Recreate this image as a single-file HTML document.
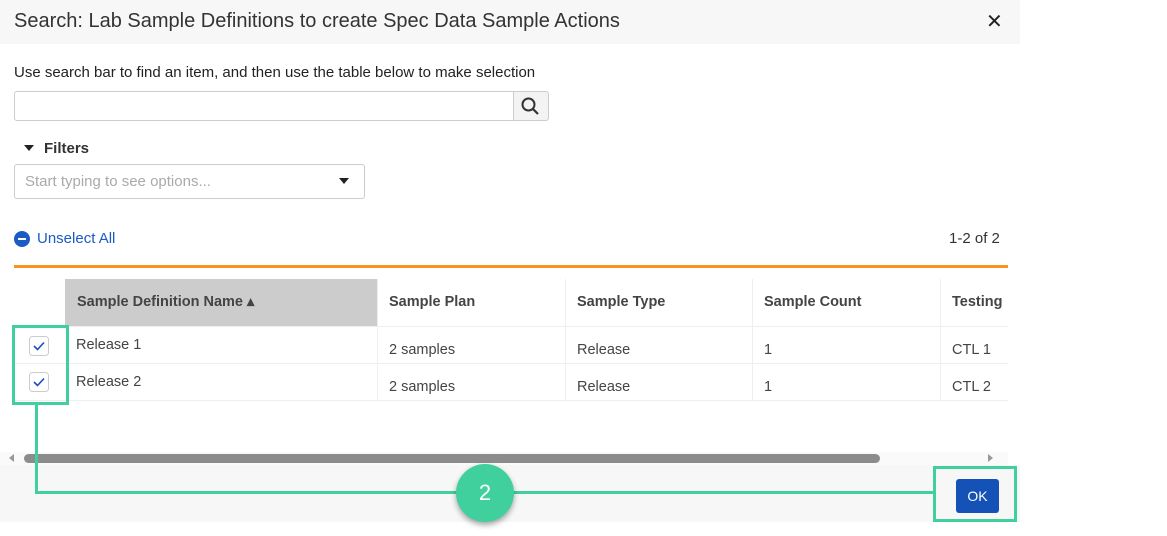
<!DOCTYPE html>
<html><head><style>
body{margin:0;width:1167px;height:536px;background:#fff;font-family:"Liberation Sans",sans-serif;position:relative;overflow:hidden;color:#333}
.a{position:absolute}
</style></head><body>
<div class="a" style="left:0;top:0;width:1020px;height:44px;background:#f7f7f7"></div>
<div class="a" style="left:14px;top:10px;font-size:20px;color:#333">Search: Lab Sample Definitions to create Spec Data Sample Actions</div>
<div class="a" style="left:986px;top:9px;font-size:20px;color:#222">✕</div>
<div class="a" style="left:14px;top:64px;font-size:15px;color:#222">Use search bar to find an item, and then use the table below to make selection</div>
<div class="a" style="left:14px;top:91px;width:498px;height:28px;border:1px solid #ccc;border-radius:3px 0 0 3px"></div>
<div class="a" style="left:513px;top:91px;width:34px;height:28px;border:1px solid #ccc;background:#f3f3f3;border-radius:0 3px 3px 0"></div>
<svg class="a" style="left:520px;top:96px" width="20" height="20" viewBox="0 0 20 20"><circle cx="8.5" cy="8.5" r="6" fill="none" stroke="#333" stroke-width="2"/><line x1="13" y1="13" x2="18" y2="18" stroke="#333" stroke-width="2.2"/></svg>
<div class="a" style="left:24px;top:145px;width:0;height:0;border-left:5px solid transparent;border-right:5px solid transparent;border-top:6px solid #222"></div>
<div class="a" style="left:44px;top:140px;font-size:15px;font-weight:bold;color:#333">Filters</div>
<div class="a" style="left:14px;top:164px;width:349px;height:33px;border:1px solid #ccc;border-radius:3px"></div>
<div class="a" style="left:25px;top:173px;font-size:15px;color:#aaa">Start typing to see options...</div>
<div class="a" style="left:339px;top:178px;width:0;height:0;border-left:5px solid transparent;border-right:5px solid transparent;border-top:6px solid #222"></div>
<div class="a" style="left:14px;top:231px;width:16px;height:16px;border-radius:50%;background:#1a5bc4"></div>
<div class="a" style="left:18px;top:238px;width:8px;height:2px;background:#fff"></div>
<div class="a" style="left:37px;top:230px;font-size:15px;color:#1a5bc4">Unselect All</div>
<div class="a" style="left:949px;top:230px;font-size:15px;color:#333">1-2 of 2</div>
<div class="a" style="left:14px;top:265px;width:994px;height:3px;background:#f7931e"></div>
<div class="a" style="left:65px;top:279px;width:312px;height:47px;background:#ccc"></div>
<div class="a" style="left:14px;top:326px;width:994px;height:1px;background:#eee"></div>
<div class="a" style="left:14px;top:363px;width:994px;height:1px;background:#eee"></div>
<div class="a" style="left:14px;top:400px;width:994px;height:1px;background:#eee"></div>
<div class="a" style="left:377px;top:279px;width:1px;height:122px;background:#eee"></div>
<div class="a" style="left:565px;top:279px;width:1px;height:122px;background:#eee"></div>
<div class="a" style="left:752px;top:279px;width:1px;height:122px;background:#eee"></div>
<div class="a" style="left:940px;top:279px;width:1px;height:122px;background:#eee"></div>
<div class="a" style="left:77px;top:294px;font-size:14.5px;font-weight:bold;color:#444">Sample Definition Name ▴</div>
<div class="a" style="left:389px;top:294px;font-size:14.5px;font-weight:bold;color:#444">Sample Plan</div>
<div class="a" style="left:577px;top:294px;font-size:14.5px;font-weight:bold;color:#444">Sample Type</div>
<div class="a" style="left:764px;top:294px;font-size:14.5px;font-weight:bold;color:#444">Sample Count</div>
<div class="a" style="left:952px;top:294px;font-size:14.5px;font-weight:bold;color:#444">Testing</div>
<div class="a" style="left:76px;top:337px;font-size:14.5px;color:#444">Release 1</div>
<div class="a" style="left:389px;top:342px;font-size:14.5px;color:#444">2 samples</div>
<div class="a" style="left:577px;top:342px;font-size:14.5px;color:#444">Release</div>
<div class="a" style="left:764px;top:342px;font-size:14.5px;color:#444">1</div>
<div class="a" style="left:952px;top:342px;font-size:14.5px;color:#444">CTL 1</div>
<div class="a" style="left:76px;top:374px;font-size:14.5px;color:#444">Release 2</div>
<div class="a" style="left:389px;top:379px;font-size:14.5px;color:#444">2 samples</div>
<div class="a" style="left:577px;top:379px;font-size:14.5px;color:#444">Release</div>
<div class="a" style="left:764px;top:379px;font-size:14.5px;color:#444">1</div>
<div class="a" style="left:952px;top:379px;font-size:14.5px;color:#444">CTL 2</div>
<svg class="a" style="left:29px;top:336px" width="20" height="20"><rect x="0.5" y="0.5" width="19" height="19" rx="3" fill="#fff" stroke="#ccc"/><path d="M5 10 L8.5 13.5 L15 6.5" fill="none" stroke="#1a4fc0" stroke-width="1.6"/></svg>
<svg class="a" style="left:29px;top:372px" width="20" height="20"><rect x="0.5" y="0.5" width="19" height="19" rx="3" fill="#fff" stroke="#ccc"/><path d="M5 10 L8.5 13.5 L15 6.5" fill="none" stroke="#1a4fc0" stroke-width="1.6"/></svg>
<div class="a" style="left:0;top:452px;width:1008px;height:13px;background:#fafafa"></div>
<div class="a" style="left:24px;top:454px;width:856px;height:9px;border-radius:5px;background:#8c8c8c"></div>
<div class="a" style="left:9px;top:454px;width:0;height:0;border-top:4px solid transparent;border-bottom:4px solid transparent;border-right:5px solid #999"></div>
<div class="a" style="left:988px;top:454px;width:0;height:0;border-top:4px solid transparent;border-bottom:4px solid transparent;border-left:5px solid #999"></div>
<div class="a" style="left:0;top:465px;width:1020px;height:57px;background:#f7f7f7"></div>
<div class="a" style="left:956px;top:479px;width:43px;height:34px;border-radius:3px;background:#1452b8;color:#fff;font-size:14px;text-align:center;line-height:34px">OK</div>
<div class="a" style="left:12px;top:325px;width:51px;height:74px;border:3px solid #40d09e"></div>
<div class="a" style="left:35px;top:402px;width:3px;height:92px;background:#40d09e"></div>
<div class="a" style="left:35px;top:491px;width:900px;height:3px;background:#40d09e"></div>
<div class="a" style="left:933px;top:466px;width:78px;height:50px;border:3px solid #40d09e"></div>
<div class="a" style="left:456px;top:464px;width:58px;height:58px;border-radius:50%;background:#40d09e;box-shadow:0 3px 6px rgba(0,0,0,.35);color:#fff;font-size:22px;text-align:center;line-height:58px">2</div>
</body></html>
